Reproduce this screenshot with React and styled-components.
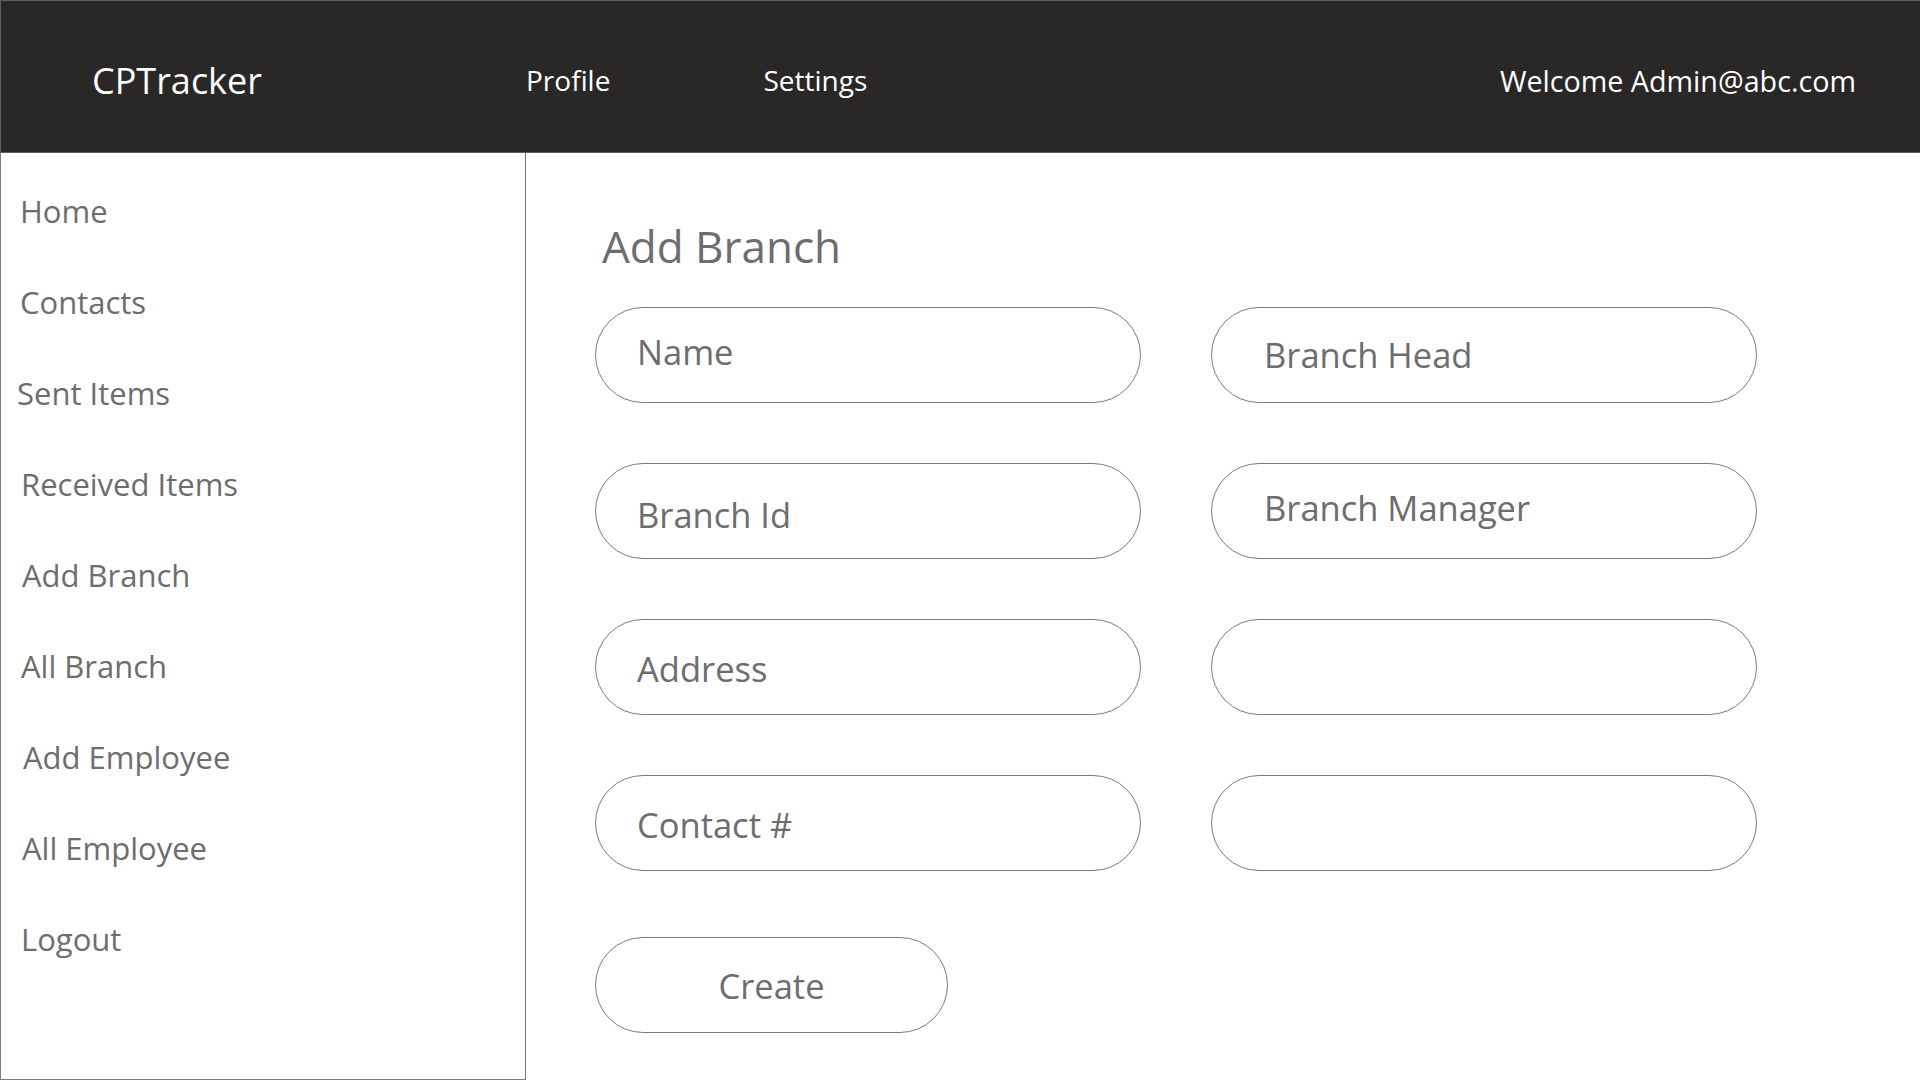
import styled, { createGlobalStyle } from "styled-components";

const GlobalStyle = createGlobalStyle`
  html, body {
    margin: 0;
    padding: 0;
    background: #fff;
  }

  body {
    font-family: "Open Sans", "Noto Sans", sans-serif;
  }

  * {
    box-sizing: border-box;
  }
`;

const Page = styled.div`
  display: flex;
  flex-direction: column;
  width: 1920px;
  height: 1080px;
  overflow: hidden;
`;

const Header = styled.header`
  display: flex;
  align-items: center;
  height: 153px;
  padding-top: 7px;

  color: #fff;
  background-color: #292826;

  border: 1px solid #5f5f5f;
  border-right: none;
`;

const Logo = styled.div`
  width: 525px;
  padding-left: 91px;

  font-size: 36px;
`;

const NavLink = styled.a`
  margin-right: 153px;

  color: #fff;
  font-size: 28px;
  text-decoration: none;
`;

const Welcome = styled.div`
  margin-left: auto;
  padding-right: 64px;

  font-size: 28.7px;
`;

const Body = styled.div`
  display: flex;
  flex: 1;
  min-height: 0;
`;

const Sidebar = styled.nav`
  display: flex;
  flex-direction: column;
  width: 526px;
  padding-top: 12px;

  border: 1px solid #7a7a7a;
  border-top: none;
`;

const SideItem = styled.a`
  display: flex;
  align-items: center;
  height: 91px;
  padding-left: ${({ $indent }) => $indent}px;

  color: #6d6d6d;
  font-size: 31px;
  text-decoration: none;
`;

const Main = styled.main`
  flex: 1;
  padding: 63px 0 0 69px;
`;

const Title = styled.h1`
  margin: 0 0 31px;
  padding-left: 7px;

  color: #6d6d6d;
  font-size: 44px;
  font-weight: 400;
  line-height: 60px;
`;

const FieldGrid = styled.div`
  display: grid;
  grid-template-columns: 546px 546px;
  grid-auto-rows: 96px;
  column-gap: 70px;
  row-gap: 60px;
`;

const Field = styled.input`
  width: 100%;
  height: 100%;
  padding: ${({ $shift }) => ($shift > 0 ? $shift * 2 : 0)}px 20px
    ${({ $shift }) => ($shift < 0 ? -$shift * 2 : 0)}px ${({ $inset }) => $inset}px;

  color: #6d6d6d;
  font-family: inherit;
  font-size: 34.5px;
  background: #fff;

  border: 1px solid #7a7a7a;
  border-radius: 48px;
  outline: none;

  &::placeholder {
    color: #6d6d6d;
  }
`;

const CreateButton = styled.button`
  width: 353px;
  height: 96px;
  margin-top: 66px;

  color: #6d6d6d;
  font-family: inherit;
  font-size: 34.5px;
  background: #fff;

  border: 1px solid #7a7a7a;
  border-radius: 48px;
`;

const MENU = [
  ["Home", 19],
  ["Contacts", 19],
  ["Sent Items", 16],
  ["Received Items", 20],
  ["Add Branch", 21],
  ["All Branch", 20],
  ["Add Employee", 22],
  ["All Employee", 21],
  ["Logout", 20],
];

const FIELDS = [
  ["Name", 41, -4],
  ["Branch Head", 52, -1],
  ["Branch Id", 41, 3],
  ["Branch Manager", 52, -4],
  ["Address", 41, 1],
  ["", 52, 0],
  ["Contact #", 41, 1],
  ["", 52, 0],
];

const App = () => (
  <>
    <GlobalStyle />
    <Page>
      <Header>
        <Logo>CPTracker</Logo>
        <NavLink href="#">Profile</NavLink>
        <NavLink href="#">Settings</NavLink>
        <Welcome>Welcome Admin@abc.com</Welcome>
      </Header>
      <Body>
        <Sidebar>
          {MENU.map(([label, indent]) => (
            <SideItem key={label} href="#" $indent={indent}>{label}</SideItem>
          ))}
        </Sidebar>
        <Main>
          <Title>Add Branch</Title>
          <FieldGrid>
            {FIELDS.map(([placeholder, inset, shift], index) => (
              <Field key={`field-${index}`} placeholder={placeholder} $inset={inset} $shift={shift} />
            ))}
          </FieldGrid>
          <CreateButton>Create</CreateButton>
        </Main>
      </Body>
    </Page>
  </>
);

export default App;
